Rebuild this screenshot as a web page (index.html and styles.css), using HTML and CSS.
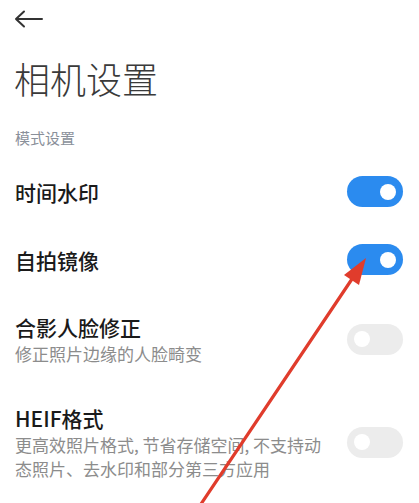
FILE: index.html
```html
<!DOCTYPE html>
<html lang="zh-CN">
<head>
<meta charset="utf-8">
<link rel="stylesheet" href="styles.css">
</head>
<body>
<div class="page">
  <div class="header">
    <svg class="back" width="30" height="18" viewBox="0 0 30 18">
      <path d="M28 9 H2 M10 1.5 L2 9 L10 16.5" fill="none" stroke="#333" stroke-width="2" stroke-linecap="round" stroke-linejoin="round"/>
    </svg>
  </div>
  <h1 class="title">相机设置</h1>
  <div class="section">模式设置</div>
  <div class="row">
    <div class="text"><div class="name">时间水印</div></div>
    <div class="toggle on"><span class="knob"></span></div>
  </div>
  <div class="row">
    <div class="text"><div class="name">自拍镜像</div></div>
    <div class="toggle on"><span class="knob"></span></div>
  </div>
  <div class="row">
    <div class="text multi">
      <div class="name">合影人脸修正</div>
      <div class="desc">修正照片边缘的人脸畸变</div>
    </div>
    <div class="toggle off"><span class="knob"></span></div>
  </div>
  <div class="row">
    <div class="text multi">
      <div class="name">HEIF格式</div>
      <div class="desc">更高效照片格式, 节省存储空间, 不支持动态照片、去水印和部分第三方应用</div>
    </div>
    <div class="toggle off"><span class="knob"></span></div>
  </div>
  <svg class="annot" width="419" height="503" viewBox="0 0 419 503">
    <line x1="199" y1="507" x2="352" y2="279" stroke="#e03c2c" stroke-width="3.2" stroke-linecap="round"/>
    <polygon points="366,258 359,285 344,275" fill="#e03c2c"/>
  </svg>
</div>
</body>
</html>
```

FILE: styles.css
```css
html, body {
  margin: 0;
  padding: 0;
  background: #ffffff;
}
body {
  font-family: "Noto Sans CJK SC", "Noto Sans", sans-serif;
  color: #1a1a1a;
}
.page {
  position: relative;
  width: 419px;
  height: 503px;
  overflow: hidden;
}
.header {
  height: 38px;
  display: flex;
  align-items: center;
  padding-left: 14px;
}
.back {
  display: block;
}
.title {
  margin: 16px 0 0 0;
  padding-left: 14px;
  font-size: 36px;
  line-height: 48px;
  font-weight: 300;
  color: #3a3a3a;
}
.section {
  padding: 26px 0 10px 15px;
  font-size: 15px;
  line-height: 20px;
  color: #8a909a;
}
.row {
  display: flex;
  align-items: center;
  gap: 17px;
  padding: 18px 16px 19px 15px;
}
.text {
  flex: 1;
  min-width: 0;
}
.name {
  font-size: 21px;
  line-height: 26px;
  font-weight: 500;
  color: #1a1a1a;
}
.multi .name {
  line-height: 30px;
}
.desc {
  font-size: 17px;
  line-height: 24px;
  color: #8c8c8c;
}
.toggle {
  flex: none;
  width: 56px;
  height: 31px;
  border-radius: 16px;
  display: flex;
  align-items: center;
  padding: 0 7px;
  box-sizing: border-box;
}
.toggle.on {
  background: #2b8bef;
  justify-content: flex-end;
}
.toggle.off {
  background: #ececec;
  justify-content: flex-start;
}
.knob {
  width: 16px;
  height: 16px;
  border-radius: 50%;
  background: #ffffff;
}
.annot {
  position: absolute;
  left: 0;
  top: 0;
  pointer-events: none;
}
```
